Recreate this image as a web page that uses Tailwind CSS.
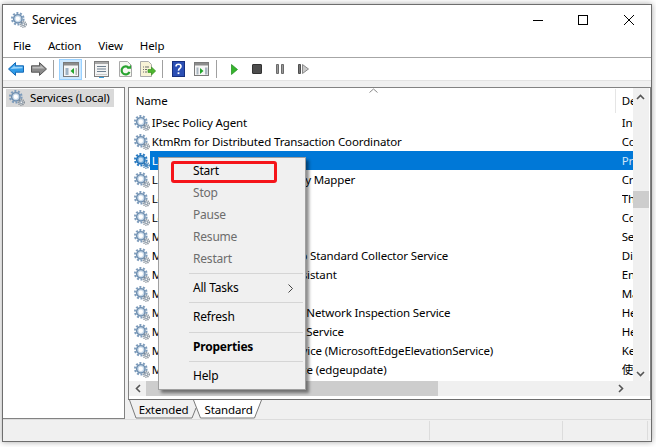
<!DOCTYPE html>
<html lang="en">
<head>
    <meta charset="UTF-8">
    <title>Services</title>
    <script src="https://cdn.jsdelivr.net/npm/@tailwindcss/browser@4"></script>
</head>
<body class="relative w-[656px] h-[447px] overflow-hidden bg-white pl-[2px] pt-[4px] text-[11.5px] tracking-[-0.13px] text-[#000] font-['Noto_Sans','Noto_Sans_CJK_SC',sans-serif]">
<svg class="hidden">
    <symbol id="gear" viewBox="0 0 16 16">
        <circle cx="6.8" cy="6.8" r="5.8" fill="none" stroke="#7d9cbc" stroke-width="2" stroke-dasharray="2 1.6"/>
        <circle cx="6.8" cy="6.8" r="4.2" fill="#c7d8e8" stroke="#6f8fb0" stroke-width="1.4"/>
        <circle cx="6.8" cy="6.8" r="2.2" fill="#fff"/>
        <circle cx="12.3" cy="12.3" r="2.9" fill="none" stroke="#76818c" stroke-width="1.3" stroke-dasharray="1.2 .9"/>
        <circle cx="12.3" cy="12.3" r="2" fill="#9aa6b2"/>
        <circle cx="12.3" cy="12.3" r=".8" fill="#fff"/>
    </symbol>
    <symbol id="gear-selected" viewBox="0 0 16 16">
        <circle cx="6.8" cy="6.8" r="5.8" fill="none" stroke="#2b7cc4" stroke-width="2" stroke-dasharray="2 1.6"/>
        <circle cx="6.8" cy="6.8" r="4.2" fill="#6fa8d8" stroke="#1e6fb5" stroke-width="1.4"/>
        <circle cx="6.8" cy="6.8" r="2.200" fill="#cfe3f3"/>
        <circle cx="12.3" cy="12.3" r="2.9" fill="none" stroke="#2c6da6" stroke-width="1.3" stroke-dasharray="1.2 .9"/>
        <circle cx="12.3" cy="12.3" r="2" fill="#4c8cc4"/>
    </symbol>
</svg>

<div class="w-[650px] h-[438px] flex flex-col border border-[#6e6e6e] bg-[#f0f0f0] shadow-[0_0_6px_rgba(0,0,0,0.35)]">
    <!-- Title bar -->
    <div class="h-[30px] bg-white flex items-center shrink-0">
        <svg class="w-4 h-4 ml-[8px]"><use href="#gear"/></svg>
        <span class="ml-[5px] text-[12px]">Services</span>
        <svg class="w-[104px] h-[14px] ml-auto mr-[14px]" viewBox="0 0 104 14" fill="none" stroke="#000">
            <path d="M0 7.5h10"/>
            <rect x="45.5" y="2.5" width="9" height="9"/>
            <path d="M91 2l10 10M101 2L91 12"/>
        </svg>
    </div>

    <!-- Menu -->
    <div class="h-[23px] bg-white flex items-center gap-[17px] pl-[10px] border-b border-[#a6a6a6] shrink-0">
        <span>File</span><span>Action</span><span>View</span><span>Help</span>
    </div>

    <!-- Toolbar -->
    <div class="h-[22px] bg-white flex items-center shrink-0">
        <svg class="w-4 h-[14px] ml-[5px]" viewBox="0 0 16 14"><path d="M.5 7L7.5.6v3.2h8v6.4h-8v3.2z" fill="#2f9be8" stroke="#1569b5"/><path d="M2.5 7l4-3.6v1.4h8v1.5z" fill="#9ad4fa"/></svg>
        <svg class="w-4 h-[14px] ml-[7px]" viewBox="0 0 16 14"><path d="M15.5 7L8.5.6v3.2h-8v6.4h8v3.2z" fill="#8b8b8b" stroke="#585858"/><path d="M1.5 4.8h8V3l4 3.5H1.5z" fill="#bdbdbd"/></svg>
        <span class="w-px h-[18px] ml-[6px] bg-[#a0a0a0]"></span>
        <span class="w-[23px] h-[21px] ml-[5px] flex items-center justify-center bg-[#cce8ff] border border-[#99d1ff]">
            <svg class="w-[16px] h-[15px]" viewBox="0 0 16 15"><rect x=".5" y=".5" width="15" height="14" fill="#f6f6f6" stroke="#7a7a7a"/><path d="M1 1h14v2.500H1z" fill="#8c8c8c"/><path d="M2.500 6h3v7h-3z" fill="#9fb2c4"/><path d="M11 6L7.500 9l3.500 3z" fill="#21a52a"/><path d="M12.500 6h1.500v7h-1.500z" fill="#b5b5b5"/></svg>
        </span>
        <span class="w-px h-[18px] ml-[3px] bg-[#a0a0a0]"></span>
        <svg class="w-[15px] h-[17px] ml-[8px]" viewBox="0 0 15 17"><rect x=".5" y=".5" width="14" height="15" fill="#f4f4f4" stroke="#7c7c7c"/><path d="M1 1h13v2H1z" fill="#a8a8a8"/><path d="M3 5.500h9M3 8h9M3 10.500h9" stroke="#6d7f8f"/><path d="M2 13h11v1H2z" fill="#c9c9c9"/><path d="M5 16h5v1H5z" fill="#39a0e0"/></svg>
        <svg class="w-[13px] h-[16px] ml-[10px]" viewBox="0 0 13 16"><path d="M.5.500h8l4 4v11H.5z" fill="#f7f7f2" stroke="#a9a9a9"/><path d="M9.800 7a4 4 0 1 0 .6 3.800" fill="none" stroke="#28a32f" stroke-width="2.200"/><path d="M8 7.800h4V3.800z" fill="#28a32f"/></svg>
        <svg class="w-[16px] h-[16px] ml-[8px]" viewBox="0 0 16 16"><path d="M.5.500h8l3 3v12H.5z" fill="#f8f3d6" stroke="#ababab"/><path d="M3 6h1M5 6h4M3 8.500h1M5 8.500h2M3 11h1M5 11h2" stroke="#6e6e6e"/><path d="M8 8.500h3.500V6l4.200 4-4.200 4v-2.500H8z" fill="#4db52f" stroke="#2e8a18" stroke-width=".6"/></svg>
        <span class="w-px h-[18px] ml-[6px] bg-[#a0a0a0]"></span>
        <svg class="w-[13px] h-[16px] ml-[9px]" viewBox="0 0 13 16"><rect width="13" height="16" fill="#2b4fb4"/><rect x=".5" y=".5" width="12" height="15" fill="none" stroke="#17307f"/><path d="M4 5.500c0-3 5-3 5 0 0 2-2.500 2-2.500 4.200" fill="none" stroke="#fff" stroke-width="1.600"/><path d="M5.600 11.300h1.800v1.800H5.600z" fill="#fff"/></svg>
        <svg class="w-[15px] h-[14px] ml-[9px]" viewBox="0 0 15 14"><rect x=".5" y=".5" width="14" height="13" fill="#f6f6f6" stroke="#7a7a7a"/><path d="M1 1h13v2.500H1z" fill="#8c8c8c"/><path d="M2.500 5.500h2v7h-2zM11 5.500h2.500v7H11z" fill="#a9b5c0"/><path d="M6 6l3.500 3L6 12z" fill="#21a52a"/></svg>
        <span class="w-px h-[18px] ml-[7px] bg-[#a0a0a0]"></span>
        <svg class="w-[7px] h-[11px] ml-[14px]" viewBox="0 0 7 11"><path d="M.5.500v10L6.500 5.500z" fill="#35b52c" stroke="#1d8a1a" stroke-width=".7"/></svg>
        <span class="w-[10px] h-[10px] ml-[14px] bg-[#4d4d4d] border border-[#333] rounded-[1px]"></span>
        <svg class="w-[8px] h-[10px] ml-[14px]" viewBox="0 0 8 10"><path d="M.5.500h2v9h-2zM5.500.500h2v9h-2z" fill="#9a9a9a" stroke="#6b6b6b"/></svg>
        <svg class="w-[11px] h-[10px] ml-[14px]" viewBox="0 0 11 10"><path d="M.5.500h2v9h-2z" fill="#777" stroke="#4e4e4e"/><path d="M4.500.500v9l6-4.500z" fill="#c9c9c9" stroke="#8a8a8a"/></svg>
    </div>

    <div class="h-[7px] border-t border-[#e3e3e3] shrink-0"></div>

    <!-- Panes -->
    <div class="flex-1 flex min-h-0">
        <!-- Tree -->
        <div class="w-[122px] bg-white border-t border-r border-b border-[#828282] pt-[1px] pl-[3px]">
            <div class="w-[108px] h-[18px] bg-[#d9d9d9] flex items-center pl-[3px] gap-[5px]">
                <svg class="w-4 h-4 shrink-0"><use href="#gear"/></svg>
                <span class="whitespace-nowrap">Services (Local)</span>
            </div>
        </div>

        <!-- List -->
        <div class="w-[525px] ml-[3px] flex flex-col">
            <div class="h-[313px] bg-white border-t border-l border-r border-b border-[#828282] border-b-[#6e6e6e] flex flex-col">
                <div class="flex flex-1 min-h-0">
                    <div class="w-[504px] flex flex-col">
                        <div class="h-[25px] flex items-center relative shrink-0">
                            <span class="ml-[7px]">Name</span>
                            <svg class="absolute left-[240px] top-[0px] w-[9px] h-[5px]" viewBox="0 0 9 5" fill="none" stroke="#8a8a8a"><path d="M.5 4.500l4-3.500 4 3.500"/></svg>
                            <span class="ml-auto h-[24px] border-l border-[#e5e5e5] pl-[6px] w-[18px] overflow-hidden leading-[24px]">Description</span>
                        </div>
                        <div class="h-[19px] flex items-center pl-[5px]"><svg class="w-4 h-4 shrink-0"><use href="#gear"/></svg><span class="w-[465px] pl-[2px] h-full leading-[19px] whitespace-nowrap">IPsec Policy Agent</span><span class="w-[11px] ml-[7px] overflow-hidden whitespace-nowrap">Internet</span></div>
                        <div class="h-[19px] flex items-center pl-[5px]"><svg class="w-4 h-4 shrink-0"><use href="#gear"/></svg><span class="w-[465px] pl-[2px] h-full leading-[19px] whitespace-nowrap">KtmRm for Distributed Transaction Coordinator</span><span class="w-[11px] ml-[7px] overflow-hidden whitespace-nowrap">Coordinates</span></div>
                        <div class="h-[19px] flex items-center pl-[5px]"><svg class="w-4 h-4 shrink-0"><use href="#gear-selected"/></svg><div class="flex-1 h-full flex items-center bg-[#0078d7] text-white"><span class="w-[465px] pl-[2px] leading-[19px] whitespace-nowrap">Language Runtime Agent</span><span class="w-[11px] ml-[7px] overflow-hidden whitespace-nowrap text-[#cfe6f7]">Provides</span></div></div>
                        <div class="h-[19px] flex items-center pl-[5px]"><svg class="w-4 h-4 shrink-0"><use href="#gear"/></svg><span class="w-[465px] pl-[2px] h-full leading-[19px] whitespace-nowrap">Link-Layer Topology Discovery Mapper</span><span class="w-[11px] ml-[7px] overflow-hidden whitespace-nowrap">Creates</span></div>
                        <div class="h-[19px] flex items-center pl-[5px]"><svg class="w-4 h-4 shrink-0"><use href="#gear"/></svg><span class="w-[465px] pl-[2px] h-full leading-[19px] whitespace-nowrap">Local Profile Assistant</span><span class="w-[11px] ml-[7px] overflow-hidden whitespace-nowrap">This</span></div>
                        <div class="h-[19px] flex items-center pl-[5px]"><svg class="w-4 h-4 shrink-0"><use href="#gear"/></svg><span class="w-[465px] pl-[2px] h-full leading-[19px] whitespace-nowrap">Local Session Manager</span><span class="w-[11px] ml-[7px] overflow-hidden whitespace-nowrap">Core</span></div>
                        <div class="h-[19px] flex items-center pl-[5px]"><svg class="w-4 h-4 shrink-0"><use href="#gear"/></svg><span class="w-[465px] pl-[2px] h-full leading-[19px] whitespace-nowrap">McpManagementService</span><span class="w-[11px] ml-[7px] overflow-hidden whitespace-nowrap">Service</span></div>
                        <div class="h-[19px] flex items-center pl-[5px]"><svg class="w-4 h-4 shrink-0"><use href="#gear"/></svg><span class="w-[465px] pl-[2px] h-full leading-[19px] whitespace-nowrap">Microsoft (R) Diagnostics Hub Standard Collector Service</span><span class="w-[11px] ml-[7px] overflow-hidden whitespace-nowrap">Diagnostics</span></div>
                        <div class="h-[19px] flex items-center pl-[5px]"><svg class="w-4 h-4 shrink-0"><use href="#gear"/></svg><span class="w-[465px] pl-[2px] h-full leading-[19px] whitespace-nowrap">Microsoft Account Sign-in Assistant</span><span class="w-[11px] ml-[7px] overflow-hidden whitespace-nowrap">Enables</span></div>
                        <div class="h-[19px] flex items-center pl-[5px]"><svg class="w-4 h-4 shrink-0"><use href="#gear"/></svg><span class="w-[465px] pl-[2px] h-full leading-[19px] whitespace-nowrap">Microsoft App-V Client</span><span class="w-[11px] ml-[7px] overflow-hidden whitespace-nowrap">Manages</span></div>
                        <div class="h-[19px] flex items-center pl-[5px]"><svg class="w-4 h-4 shrink-0"><use href="#gear"/></svg><span class="w-[465px] pl-[2px] h-full leading-[19px] whitespace-nowrap">Microsoft Defender Antivirus Network Inspection Service</span><span class="w-[11px] ml-[7px] overflow-hidden whitespace-nowrap">Helps</span></div>
                        <div class="h-[19px] flex items-center pl-[5px]"><svg class="w-4 h-4 shrink-0"><use href="#gear"/></svg><span class="w-[465px] pl-[2px] h-full leading-[19px] whitespace-nowrap">Microsoft Defender Antivirus Service</span><span class="w-[11px] ml-[7px] overflow-hidden whitespace-nowrap">Helps</span></div>
                        <div class="h-[19px] flex items-center pl-[5px]"><svg class="w-4 h-4 shrink-0"><use href="#gear"/></svg><span class="w-[465px] pl-[2px] h-full leading-[19px] whitespace-nowrap">Microsoft Edge Elevation Service (MicrosoftEdgeElevationService)</span><span class="w-[11px] ml-[7px] overflow-hidden whitespace-nowrap">Keeps</span></div>
                        <div class="h-[19px] flex items-center pl-[5px]"><svg class="w-4 h-4 shrink-0"><use href="#gear"/></svg><span class="w-[465px] pl-[2px] h-full leading-[19px] whitespace-nowrap">Microsoft Edge Update Service (edgeupdate)</span><span class="w-[11px] ml-[7px] overflow-hidden whitespace-nowrap">使你</span></div>
                    </div>
                    <!-- Vertical scrollbar -->
                    <div class="w-[16px] bg-[#f0f0f0] flex flex-col items-center">
                        <svg class="w-[9px] h-[6px] mt-[6px] shrink-0" viewBox="0 0 9 6" fill="none" stroke="#555" stroke-width="1.600"><path d="M1 5l3.500-3.500L8 5"/></svg>
                        <div class="w-full h-[17px] mt-[91px] bg-[#cdcdcd] shrink-0"></div>
                        <svg class="w-[9px] h-[6px] mt-auto mb-[4px] shrink-0" viewBox="0 0 9 6" fill="none" stroke="#555" stroke-width="1.600"><path d="M1 1l3.500 3.500L8 1"/></svg>
                    </div>
                </div>
                <!-- Horizontal scrollbar -->
                <div class="h-[15px] mb-[3px] bg-[#f0f0f0] flex items-center shrink-0">
                    <svg class="w-[6px] h-[9px] ml-[6px] shrink-0" viewBox="0 0 6 9" fill="none" stroke="#555" stroke-width="1.600"><path d="M5 1L1.500 4.500 5 8"/></svg>
                    <div class="w-[292px] h-full ml-[5px] bg-[#cdcdcd]"></div>
                    <svg class="w-[6px] h-[9px] ml-[180px] shrink-0" viewBox="0 0 6 9" fill="none" stroke="#555" stroke-width="1.600"><path d="M1 1l3.500 3.500L1 8"/></svg>
                </div>
            </div>

            <!-- Tabs -->
            <div class="relative h-[19px] flex items-center">
                <svg class="absolute left-0 top-0 w-[140px] h-[19px]" viewBox="0 0 140 19">
                    <path d="M1.500 0L8 18h56l4-10" fill="none" stroke="#7a7a7a"/>
                    <path d="M65.500 0L72.500 18h54L133.500 0z" fill="#fff"/>
                    <path d="M65.500 0L72.500 18h54L133.500 0" fill="none" stroke="#7a7a7a"/>
                </svg>
                <span class="relative ml-[11px]">Extended</span>
                <span class="relative ml-[16px]">Standard</span>
            </div>
        </div>
    </div>

    <!-- Status bar -->
    <div class="h-[22px] border-t border-[#dcdcdc] shrink-0 flex pt-[1px] pb-[1px]">
        <span class="w-[427px] border-r border-[#dcdcdc]"></span>
        <span class="w-[133px] border-r border-[#dcdcdc]"></span>
        <span class="w-[85px] border-r border-[#dcdcdc]"></span>
    </div>
</div>

<!-- Context menu -->
<div class="absolute left-[158px] top-[157px] w-[148px] h-[233px] bg-[#f0f0f0] border border-[#a0a0a0] shadow-[3px_3px_3px_rgba(0,0,0,0.45)] pt-[2px] text-[12px] tracking-[-0.2px]">
    <div class="h-[22px] pl-[34px] leading-[22px]">Start</div>
    <div class="h-[22px] pl-[34px] leading-[22px] text-[#6d6d6d]">Stop</div>
    <div class="h-[22px] pl-[34px] leading-[22px] text-[#6d6d6d]">Pause</div>
    <div class="h-[22px] pl-[34px] leading-[22px] text-[#6d6d6d]">Resume</div>
    <div class="h-[22px] pl-[34px] leading-[22px] text-[#6d6d6d]">Restart</div>
    <div class="h-[7px] ml-[30px] mr-[2px] flex items-center"><div class="w-full h-px bg-[#d5d5d5]"></div></div>
    <div class="h-[22px] pl-[34px] pr-[12px] leading-[22px] flex items-center justify-between">All Tasks
        <svg class="w-[5px] h-[9px]" viewBox="0 0 5 9" fill="none" stroke="#444"><path d="M.5.500l4 4-4 4"/></svg>
    </div>
    <div class="h-[7px] ml-[30px] mr-[2px] flex items-center"><div class="w-full h-px bg-[#d5d5d5]"></div></div>
    <div class="h-[22px] pl-[34px] leading-[22px]">Refresh</div>
    <div class="h-[8px] ml-[30px] mr-[2px] flex items-center"><div class="w-full h-px bg-[#d5d5d5]"></div></div>
    <div class="h-[22px] pl-[34px] leading-[22px] font-bold">Properties</div>
    <div class="h-[7px] ml-[30px] mr-[2px] flex items-center"><div class="w-full h-px bg-[#d5d5d5]"></div></div>
    <div class="h-[22px] pl-[34px] leading-[22px]">Help</div>
</div>

<!-- Red annotation box -->
<div class="absolute left-[171px] top-[161px] w-[106px] h-[22px] border-[3px] border-[#f5141a] rounded-[3px]"></div>
</body>
</html>
